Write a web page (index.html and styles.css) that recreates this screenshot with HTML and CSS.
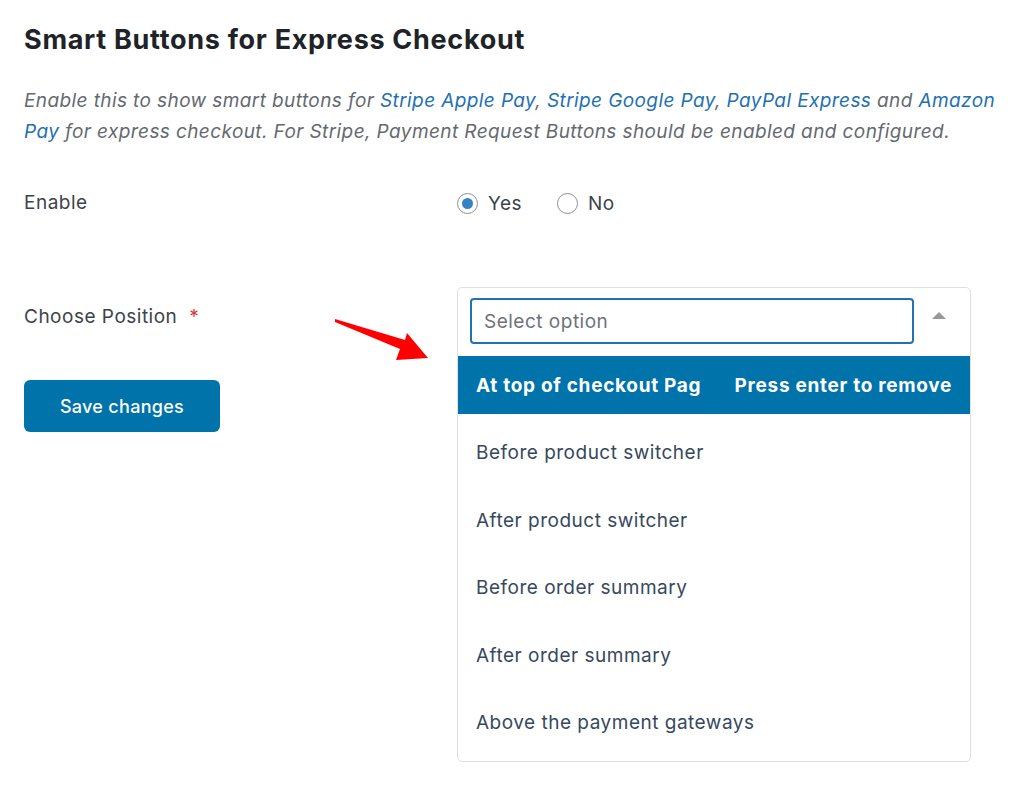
FILE: index.html
```html
<!DOCTYPE html>
<html>
<head>
<meta charset="utf-8">
<link rel="stylesheet" href="styles.css">
</head>
<body>
<div class="page">
  <h2 class="title">Smart Buttons for Express Checkout</h2>
  <p class="desc">Enable this to show smart buttons for <a href="#">Stripe Apple Pay</a>, <a href="#">Stripe Google Pay</a>, <a href="#">PayPal Express</a> and <a href="#">Amazon Pay</a> for express checkout. For Stripe, Payment Request Buttons should be enabled and configured.</p>

  <div class="row row-enable">
    <div class="label">Enable</div>
    <div class="field radios">
      <label class="radio"><span class="dot checked"></span>Yes</label>
      <label class="radio"><span class="dot"></span>No</label>
    </div>
  </div>

  <div class="row row-position">
    <div class="left">
      <div class="label">Choose Position <span class="req">*</span></div>
      <button class="save">Save changes</button>
    </div>
    <div class="field">
      <div class="select">
        <div class="select-top">
          <div class="input">Select option</div>
          <span class="caret"></span>
        </div>
        <ul class="options">
          <li class="opt active"><span>At top of checkout Pag</span><span>Press enter to remove</span></li>
          <li class="opt">Before product switcher</li>
          <li class="opt">After product switcher</li>
          <li class="opt">Before order summary</li>
          <li class="opt">After order summary</li>
          <li class="opt">Above the payment gateways</li>
        </ul>
      </div>
    </div>
    <svg class="arrow" width="100" height="50" viewBox="330 315 100 50"><polygon points="335,319 405,340 407,333 428,358 396,360 400,349 335,322" fill="#ff0000"/></svg>
  </div>
</div>
</body>
</html>
```

FILE: styles.css
```css
* { box-sizing: border-box; }
html, body { margin: 0; padding: 0; background: #fff; }
body { font-family: Inter, "Noto Sans", sans-serif; color: #3c434a; }
.page { padding: 0 0 0 24px; width: 1024px; position: relative; }
.title { margin: 0; padding-top: 24px; font-size: 27px; font-weight: 700; color: #1d2327; line-height: 32px; letter-spacing: 0.7px; }
.desc { margin: 29px 0 0; font-size: 19px; line-height: 31px; font-style: italic; color: #646970; width: 985px; letter-spacing: 0.4px; }
.desc a { color: #2271b1; text-decoration: none; }
.row { display: flex; position: relative; }
.row-enable { margin-top: 44px; height: 24px; align-items: center; }
.label { width: 433px; font-size: 19px; color: #3c434a; line-height: 24px; letter-spacing: 0.5px; }
.req { color: #d63638; margin-left: 6px; }
.radios { display: flex; gap: 35px; align-items: center; }
.radio { display: flex; align-items: center; font-size: 19px; color: #3c434a; letter-spacing: 0.5px; }
.dot { width: 21px; height: 21px; border: 1px solid #8c8f94; border-radius: 50%; margin-right: 10px; display: flex; align-items: center; justify-content: center; background: #fff; }
.dot.checked::after { content: ""; width: 11px; height: 11px; border-radius: 50%; background: #3582c4; }
.row-position { margin-top: 72px; }
.left { width: 433px; padding-top: 18px; }
.save { margin-top: 51px; width: 196px; height: 52px; border: 0; border-radius: 6px; background: #0073aa; color: #fff; font-family: Inter, "Noto Sans", sans-serif; font-size: 18px; font-weight: 500; letter-spacing: 0.3px; }
.select { width: 514px; border: 1px solid #e0e0e0; border-radius: 5px; background: #fff; padding-bottom: 4px; }
.select-top { display: flex; align-items: flex-start; padding: 10px 0 0 12px; }
.input { width: 444px; height: 46px; border: 2px solid #2271b1; border-radius: 4px; padding-left: 12px; display: flex; align-items: center; font-size: 19px; color: #6e7379; letter-spacing: 0.5px; }
.caret { margin: 14px 0 0 18px; width: 0; height: 0; border-left: 7px solid transparent; border-right: 7px solid transparent; border-bottom: 7px solid #999; }
.options { list-style: none; margin: 12px 0 0; padding: 0; }
.opt { height: 67.5px; display: flex; align-items: center; padding: 0 18px; font-size: 19px; color: #35495e; letter-spacing: 0.5px; }
.opt.active { height: 58px; margin-bottom: 5px; background: #0073aa; color: #fff; font-weight: 700; justify-content: space-between; letter-spacing: 0.7px; }
.arrow { position: absolute; left: 306px; top: 28px; }
```
